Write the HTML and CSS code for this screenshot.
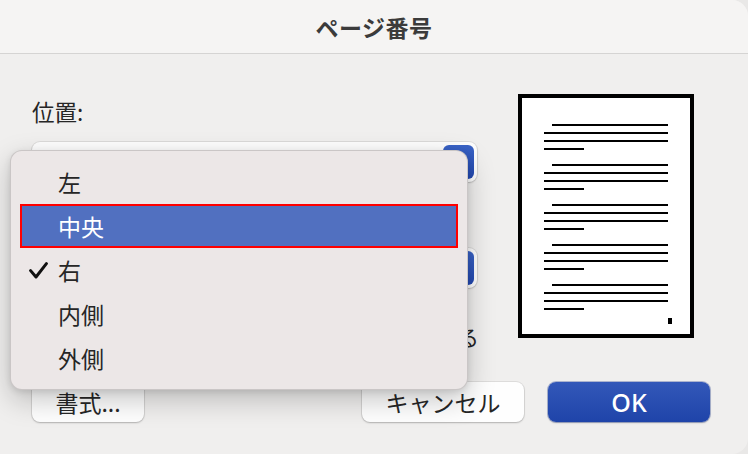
FILE: index.html
```html
<!DOCTYPE html>
<html lang="ja">
<head>
<meta charset="utf-8">
<link rel="stylesheet" href="styles.css">
</head>
<body>
<div class="window">
  <header class="titlebar"><span class="title">ページ番号</span></header>
  <main class="main">
    <section class="left">
      <div class="label label-first">位置:</div>
      <div class="popup">
        <span class="popup-value"></span>
        <span class="stepper"></span>
      </div>
      <div class="label-gap"></div>
      <div class="popup">
        <span class="popup-value"></span>
        <span class="stepper"></span>
      </div>
      <div class="check-row">
        <span class="checkbox"></span>
        <span class="check-label">最初のページにページ番号を表示する</span>
      </div>
    </section>
    <section class="preview">
      <svg width="176" height="244" viewBox="0 0 176 244">
        <rect x="2" y="2" width="172" height="240" fill="#fff" stroke="#000" stroke-width="4"/>
        <g fill="#000">
          <rect x="34" y="30" width="116" height="2"/><rect x="26" y="38" width="124" height="2"/><rect x="26" y="46" width="124" height="2"/><rect x="26" y="54" width="40" height="2"/>
          <rect x="34" y="70" width="116" height="2"/><rect x="26" y="78" width="124" height="2"/><rect x="26" y="86" width="124" height="2"/><rect x="26" y="94" width="40" height="2"/>
          <rect x="34" y="110" width="116" height="2"/><rect x="26" y="118" width="124" height="2"/><rect x="26" y="126" width="124" height="2"/><rect x="26" y="134" width="40" height="2"/>
          <rect x="34" y="150" width="116" height="2"/><rect x="26" y="158" width="124" height="2"/><rect x="26" y="166" width="124" height="2"/><rect x="26" y="174" width="40" height="2"/>
          <rect x="34" y="190" width="116" height="2"/><rect x="26" y="198" width="124" height="2"/><rect x="26" y="206" width="124" height="2"/><rect x="26" y="214" width="40" height="2"/>
          <rect x="150" y="224" width="4" height="6"/>
        </g>
      </svg>
    </section>
  </main>
  <footer class="footer">
    <button class="btn btn-format">書式...</button>
    <span class="spacer"></span>
    <button class="btn btn-cancel">キャンセル</button>
    <button class="btn btn-ok">OK</button>
  </footer>

  <div class="menu">
    <div class="item"><span class="mark"></span><span>左</span></div>
    <div class="item item-active"><span class="mark"></span><span>中央</span></div>
    <div class="item"><span class="mark"><svg width="19" height="17" viewBox="0 0 19 17"><path d="M1.6 8.6 L7 15 L17.4 1.6" fill="none" stroke="#111" stroke-width="3" stroke-linecap="round" stroke-linejoin="round"/></svg></span><span>右</span></div>
    <div class="item"><span class="mark"></span><span>内側</span></div>
    <div class="item"><span class="mark"></span><span>外側</span></div>
  </div>
</div>
</body>
</html>
```
FILE: styles.css
```css
* { box-sizing: border-box; }
html, body { margin: 0; padding: 0; }
body {
  background: #e9e8e7;
  font-family: "Noto Sans CJK JP", "Noto Sans", sans-serif;
  color: #262626;
}
.window {
  position: relative;
  width: 748px;
  height: 454px;
  background: #f0efee;
  border-radius: 0 16px 16px 0;
  overflow: hidden;
  display: flex;
  flex-direction: column;
}
.titlebar {
  height: 54px;
  flex: none;
  background: #f5f4f3;
  border-bottom: 1px solid #d5d4d3;
  display: flex;
  align-items: center;
  justify-content: center;
}
.title {
  font-size: 23px;
  font-weight: 700;
  color: #3b3b3b;
  letter-spacing: 0.5px;
  padding-top: 1px;
}
.main {
  height: 328px;
  flex: none;
  display: grid;
  grid-template-columns: 445px 176px;
  column-gap: 41px;
  padding: 40px 0 0 32px;
}
.left {
  display: flex;
  flex-direction: column;
}
.label {
  font-size: 22.5px;
  line-height: 34px;
  height: 34px;
}
.label-first { margin-bottom: 14px; }
.label-gap { height: 66px; flex: none; }
.popup {
  height: 40px;
  flex: none;
  border-radius: 8px;
  background: #fdfdfd;
  box-shadow: 0 0 0 1px rgba(0,0,0,0.08), 0 1px 2px rgba(0,0,0,0.15);
  display: flex;
  align-items: center;
  padding: 3px;
}
.popup-value { flex: 1; }
.stepper {
  width: 31px;
  height: 34px;
  border-radius: 6px;
  background: linear-gradient(#3a63c6, #2248b0);
}
.check-row {
  margin-top: 34px;
  height: 28px;
  display: flex;
  align-items: center;
  justify-content: space-between;
  font-size: 22px;
}
.checkbox {
  width: 20px;
  height: 20px;
  border-radius: 5px;
  background: #fff;
  box-shadow: 0 0 0 1px rgba(0,0,0,0.2);
}
.check-label { margin-right: -2px; }
.preview { padding: 0; }
.preview svg { display: block; }

.footer {
  height: 40px;
  flex: none;
  display: flex;
  gap: 24px;
  padding: 0 38px 0 32px;
}
.spacer { flex: 1; }
.btn {
  height: 40px;
  border: none;
  border-radius: 8px;
  font-family: "Noto Sans CJK JP", "Noto Sans", sans-serif;
  font-size: 23px;
  color: #262626;
  background: #fefefe;
  box-shadow: 0 0 0 1px rgba(0,0,0,0.07), 0 1px 2px rgba(0,0,0,0.2);
  padding: 0;
}
.btn-format { width: 112px; }
.btn-cancel { width: 162px; }
.btn-ok {
  width: 162px;
  color: #fff;
  font-family: "Noto Sans", sans-serif;
  font-weight: 500;
  font-size: 25px;
  background: linear-gradient(#3358b9, #1f44a9);
  box-shadow: 0 0 0 1px rgba(20,50,140,0.3), 0 1px 2px rgba(0,0,0,0.2);
}

.menu {
  position: absolute;
  left: 10px;
  top: 150px;
  width: 458px;
  height: 240px;
  background: #ece7e7;
  border-radius: 12px;
  border: 1px solid rgba(0,0,0,0.14);
  box-shadow: 0 10px 28px rgba(0,0,0,0.22), 0 2px 6px rgba(0,0,0,0.1);
  padding: 9px 0 0;
}
.item {
  height: 44px;
  display: flex;
  align-items: center;
  font-size: 23px;
  line-height: 44px;
  color: #262626;
  margin: 0 9px;
}
.mark {
  width: 38px;
  flex: none;
  display: flex;
  align-items: center;
  padding-left: 9px;
}
.mark svg { display: block; }
.item-active {
  background: #5170c0;
  color: #fff;
  border: 2px solid #ff0000;
  line-height: 40px;
}
.item-active .mark { width: 36px; }
```
